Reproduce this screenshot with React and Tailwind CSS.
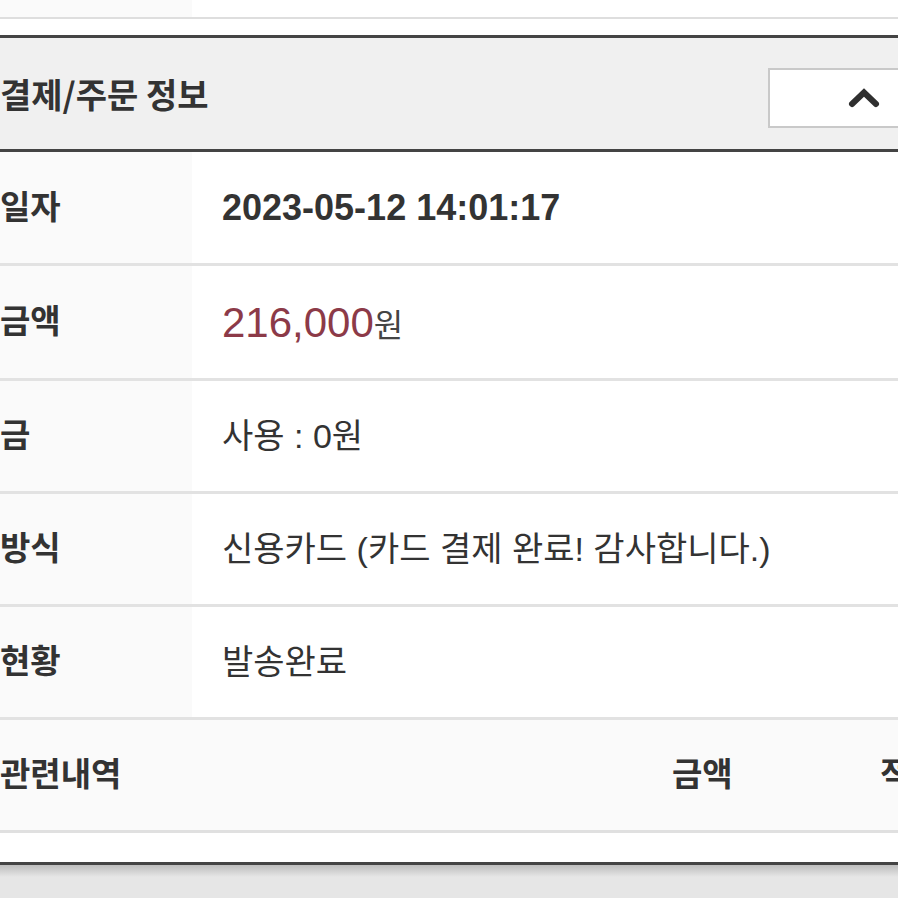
import React from 'react';

const rows = [
  { label: '일자', h: 'h-[111px]', value: <span className="text-[36px] font-bold text-[#333]">2023-05-12 14:01:17</span> },
  {
    label: '금액',
    h: 'h-[112px]',
    value: (
      <span className="flex items-baseline">
        <span className="text-[42px] text-[#8c3a48]">216,000</span>
        <span className="text-[32px] text-[#444]">원</span>
      </span>
    ),
  },
  { label: '금', h: 'h-[110px]', value: <span className="text-[34px] text-[#333]">사용 : 0원</span> },
  { label: '방식', h: 'h-[110px]', value: <span className="text-[34px] text-[#333]">신용카드 (카드 결제 완료! 감사합니다.)</span> },
  { label: '현황', h: 'h-[110px]', value: <span className="text-[34px] text-[#333]">발송완료</span> },
];

const ChevronUp = () => (
  <svg width="32" height="21" viewBox="0 0 32 21" fill="none">
    <polyline points="4,17 16,5.5 28,17" stroke="#2f2f2f" strokeWidth="6" strokeLinejoin="miter" strokeLinecap="round" />
  </svg>
);

export default function App() {
  return (
    <div
      className="w-[898px] h-[898px] overflow-hidden bg-white text-[#333] flex flex-col"
      style={{ fontFamily: '"Liberation Sans", "Noto Sans CJK KR", sans-serif' }}
    >
      {/* row above, cut off */}
      <div className="flex h-[17px] shrink-0">
        <div className="w-[192px] bg-[#fafafa]"></div>
        <div className="flex-1 bg-white"></div>
      </div>
      <div className="h-[2px] bg-[#dedede] shrink-0"></div>
      <div className="h-[16px] shrink-0"></div>

      {/* section */}
      <div className="border-t-[3px] border-b-[3px] border-[#444] shrink-0">
        <div className="h-[111px] bg-[#f0f0f0] flex items-center justify-between border-b-[3px] border-[#444] box-content">
          <h2 className="text-[34px] font-bold text-[#333] whitespace-nowrap" style={{ fontFamily: '"Noto Sans CJK KR", sans-serif' }}>
            결제/주문 정보
          </h2>
          <button className="w-[192px] h-[60px] mt-[8px] mr-[-62px] bg-white border-2 border-[#c9c9c9] flex items-center justify-center">
            <ChevronUp />
          </button>
        </div>

        {rows.map((r) => (
          <div key={r.label} className={`flex ${r.h} border-b-[3px] border-[#e2e2e2] box-content`}>
            <div className="w-[192px] bg-[#fafafa] flex items-center text-[33px] font-bold text-[#333] whitespace-nowrap">
              {r.label}
            </div>
            <div className="flex-1 flex items-center pl-[30px] whitespace-nowrap">{r.value}</div>
          </div>
        ))}

        <div className="h-[110px] bg-[#fafafa] flex items-center border-b-[3px] border-[#e0e0e0] box-content text-[33px] font-bold text-[#333] whitespace-nowrap">
          <span className="w-[672px] shrink-0">관련내역</span>
          <span className="w-[208px] shrink-0">금액</span>
          <span className="shrink-0">적립</span>
        </div>

        <div className="h-[29px] bg-white"></div>
      </div>

      <div className="h-[12px] shrink-0 bg-gradient-to-b from-[#bdbdbd] to-[#e6e6e6]"></div>
      <div className="flex-1 bg-[#e6e6e6]"></div>
    </div>
  );
}
